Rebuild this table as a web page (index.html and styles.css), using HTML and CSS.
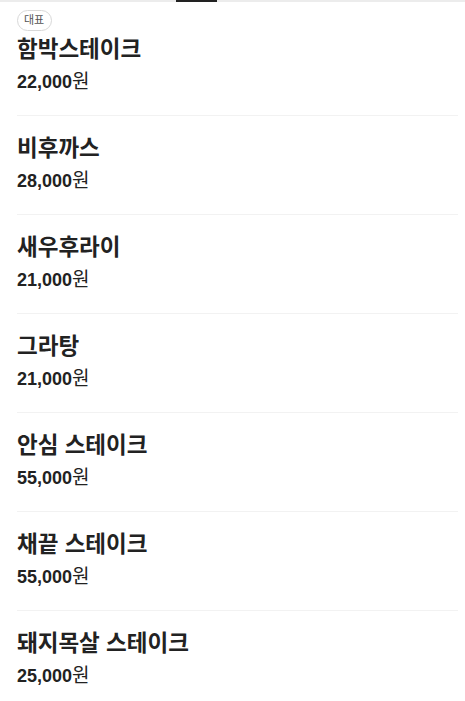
FILE: index.html
```html
<!DOCTYPE html>
<html lang="ko">
<head>
<meta charset="utf-8">
<link rel="stylesheet" href="styles.css">
</head>
<body>
<div class="tabbar"><span class="tab-indicator"></span></div>
<ul class="menu">
  <li class="item">
    <span class="badge">대표</span>
    <div class="name">함박스테이크</div>
    <div class="price"><b>22,000</b><span class="won">원</span></div>
  </li>
  <li class="item">
    <div class="name">비후까스</div>
    <div class="price"><b>28,000</b><span class="won">원</span></div>
  </li>
  <li class="item">
    <div class="name">새우후라이</div>
    <div class="price"><b>21,000</b><span class="won">원</span></div>
  </li>
  <li class="item">
    <div class="name">그라탕</div>
    <div class="price"><b>21,000</b><span class="won">원</span></div>
  </li>
  <li class="item">
    <div class="name">안심 스테이크</div>
    <div class="price"><b>55,000</b><span class="won">원</span></div>
  </li>
  <li class="item">
    <div class="name">채끝 스테이크</div>
    <div class="price"><b>55,000</b><span class="won">원</span></div>
  </li>
  <li class="item">
    <div class="name">돼지목살 스테이크</div>
    <div class="price"><b>25,000</b><span class="won">원</span></div>
  </li>
</ul>
</body>
</html>
```
FILE: styles.css
```css
html, body {
  margin: 0;
  padding: 0;
  background: #fff;
}
body {
  font-family: "Liberation Sans", "Noto Sans CJK KR", sans-serif;
  color: #222;
}
.tabbar {
  height: 2px;
  background: #ececec;
  position: relative;
}
.tab-indicator {
  position: absolute;
  left: 176px;
  top: 0;
  width: 41px;
  height: 2px;
  background: #222;
}
.menu {
  list-style: none;
  margin: 0;
  padding: 0 7px 0 17px;
}
.item {
  display: flex;
  flex-direction: column;
  align-items: flex-start;
  padding: 19px 0 21px;
  border-bottom: 1px solid #f2f2f2;
}
.item:first-child {
  padding-top: 8px;
}
.item:last-child {
  border-bottom: none;
}
.badge {
  display: inline-block;
  box-sizing: border-box;
  height: 21px;
  line-height: 19px;
  padding: 0 7px 0 6px;
  border: 1px solid #d8d8d8;
  border-radius: 11px;
  font-size: 11px;
  color: #555;
  margin-bottom: 5px;
}
.name {
  font-size: 22.5px;
  line-height: 28px;
  font-weight: bold;
  color: #222;
}
.price {
  margin-top: 6px;
  font-size: 18px;
  line-height: 24px;
  color: #222;
  font-weight: 400;
}
.price b {
  font-weight: bold;
}
.won {
  font-weight: 400;
  font-size: 19px;
}
```
